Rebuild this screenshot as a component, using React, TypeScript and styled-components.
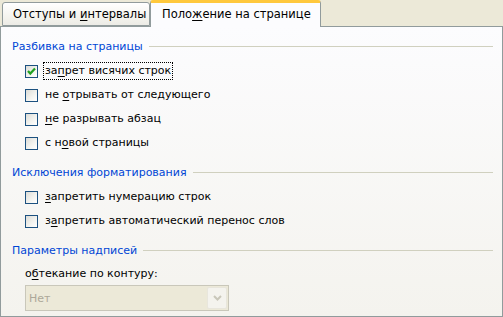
import React from "react";
import styled, { createGlobalStyle } from "styled-components";

const Global = createGlobalStyle`
  html, body { margin: 0; padding: 0; background: #ECE9D8; overflow: hidden; }
  body { font-family: "DejaVu Sans", "Liberation Sans", sans-serif; font-size: 11px; color: #000; }
`;

const Root = styled.div`
  width: 503px;
  height: 317px;
  display: flex;
  flex-direction: column;
  background: #ECE9D8;
`;

const TabStrip = styled.div`
  height: 26px;
  display: flex;
  align-items: flex-end;
  padding-left: 2px;
  position: relative;
  z-index: 2;
`;

const Tab = styled.div<{ $active?: boolean }>`
  box-sizing: border-box;
  width: ${(p) => (p.$active ? 171 : 148)}px;
  height: ${(p) => (p.$active ? 27 : 24)}px;
  margin-bottom: ${(p) => (p.$active ? -1 : 0)}px;
  border: 1px solid #919B9C;
  border-bottom: ${(p) => (p.$active ? "none" : "1px solid #919B9C")};
  border-top: ${(p) => (p.$active ? "3px solid #FFC83C" : "1px solid #919B9C")};
  border-radius: 3px 3px 0 0;
  background: ${(p) =>
    p.$active ? "#FCFCFE" : "linear-gradient(#FFFFFF, #F3F2EC 70%, #ECEBE6)"};
  display: flex;
  align-items: center;
  padding-left: ${(p) => (p.$active ? 11 : 10)}px;
  padding-bottom: ${(p) => (p.$active ? 2 : 0)}px;
  white-space: nowrap;
  font-size: 11.5px;
`;

const Panel = styled.div`
  flex: 1;
  box-sizing: border-box;
  border: 1px solid #919B9C;
  background: linear-gradient(#FCFCFE, #F4F3EE);
  padding: 10px 9px 0 11px;
  display: flex;
  flex-direction: column;
`;

const GroupHeader = styled.div<{ $gapTop?: number }>`
  height: 18px;
  margin-top: ${(p) => p.$gapTop ?? 0}px;
  display: flex;
  align-items: center;
  gap: 6px;
  color: #0046D5;
  font-size: 11px;
  white-space: nowrap;
  &::after {
    content: "";
    flex: 1;
    height: 1px;
    background: #D0D0BF;
  }
`;

const Rows = styled.div<{ $gapTop?: number }>`
  margin-top: ${(p) => p.$gapTop ?? 4}px;
  display: flex;
  flex-direction: column;
`;

const Row = styled.label`
  height: 24px;
  display: flex;
  align-items: center;
  padding-left: 13px;
  gap: 5px;
  font-size: 11px;
  white-space: nowrap;
`;

const Box = styled.span`
  box-sizing: border-box;
  width: 13px;
  height: 13px;
  border: 1px solid #1C5180;
  background: linear-gradient(135deg, #DCDCD7, #F4F4F0 60%, #FFFFFF);
  display: flex;
  align-items: center;
  justify-content: center;
`;

const LabelText = styled.span<{ $focus?: boolean }>`
  padding: 1px 1px;
  border: 1px ${(p) => (p.$focus ? "dotted #000" : "solid transparent")};
  line-height: 14px;
`;

const U = styled.u`
  text-decoration: underline;
  text-underline-offset: 2px;
`;

const FieldLabel = styled.div`
  margin-top: 8px;
  padding-left: 13px;
  height: 14px;
  line-height: 14px;
  font-size: 11px;
  white-space: nowrap;
`;

const Select = styled.div`
  margin: 4px 0 0 13px;
  box-sizing: border-box;
  width: 204px;
  height: 26px;
  border: 1px solid #C9C7BA;
  background: #ECE9D8;
  display: flex;
  align-items: center;
  justify-content: space-between;
  padding: 0 1px 0 3px;
  color: #ACA899;
  font-size: 11px;
`;

const DropButton = styled.span`
  box-sizing: border-box;
  width: 20px;
  height: 22px;
  border: 1px solid #E8E6DC;
  background: #F4F3EE;
  border-radius: 2px;
  display: flex;
  align-items: center;
  justify-content: center;
`;

const Check = () => (
  <svg width="11" height="11" viewBox="0 0 11 11">
    <path d="M2 5 L4.3 7.6 L9 2.4" fill="none" stroke="#21A121" strokeWidth="2.2" />
  </svg>
);

const CheckRow: React.FC<{ checked?: boolean; focus?: boolean; children: React.ReactNode }> = ({
  checked,
  focus,
  children,
}) => (
  <Row>
    <Box>{checked && <Check />}</Box>
    <LabelText $focus={focus}>{children}</LabelText>
  </Row>
);

export default function App() {
  return (
    <Root>
      <Global />
      <TabStrip>
        <Tab>
          <span>
            Отступы и <U>и</U>нтервалы
          </span>
        </Tab>
        <Tab $active>
          <span>
            Поло<U>ж</U>ение на странице
          </span>
        </Tab>
      </TabStrip>
      <Panel>
        <GroupHeader>Разбивка на страницы</GroupHeader>
        <Rows>
          <CheckRow checked focus>
            за<U>п</U>рет висячих строк
          </CheckRow>
          <CheckRow>
            не <U>о</U>трывать от следующего
          </CheckRow>
          <CheckRow>
            <U>н</U>е разрывать абзац
          </CheckRow>
          <CheckRow>
            с н<U>о</U>вой страницы
          </CheckRow>
        </Rows>
        <GroupHeader $gapTop={8}>Исключения форматирования</GroupHeader>
        <Rows>
          <CheckRow>
            <U>з</U>апретить нумерацию строк
          </CheckRow>
          <CheckRow>
            з<U>а</U>претить автоматический перенос слов
          </CheckRow>
        </Rows>
        <GroupHeader $gapTop={8}>Параметры надписей</GroupHeader>
        <FieldLabel>
          о<U>б</U>текание по контуру:
        </FieldLabel>
        <Select>
          <span>Нет</span>
          <DropButton>
            <svg width="9" height="6" viewBox="0 0 9 6">
              <path d="M1 1 L4.5 4.5 L8 1" fill="none" stroke="#C9C7BA" strokeWidth="2" />
            </svg>
          </DropButton>
        </Select>
      </Panel>
    </Root>
  );
}
